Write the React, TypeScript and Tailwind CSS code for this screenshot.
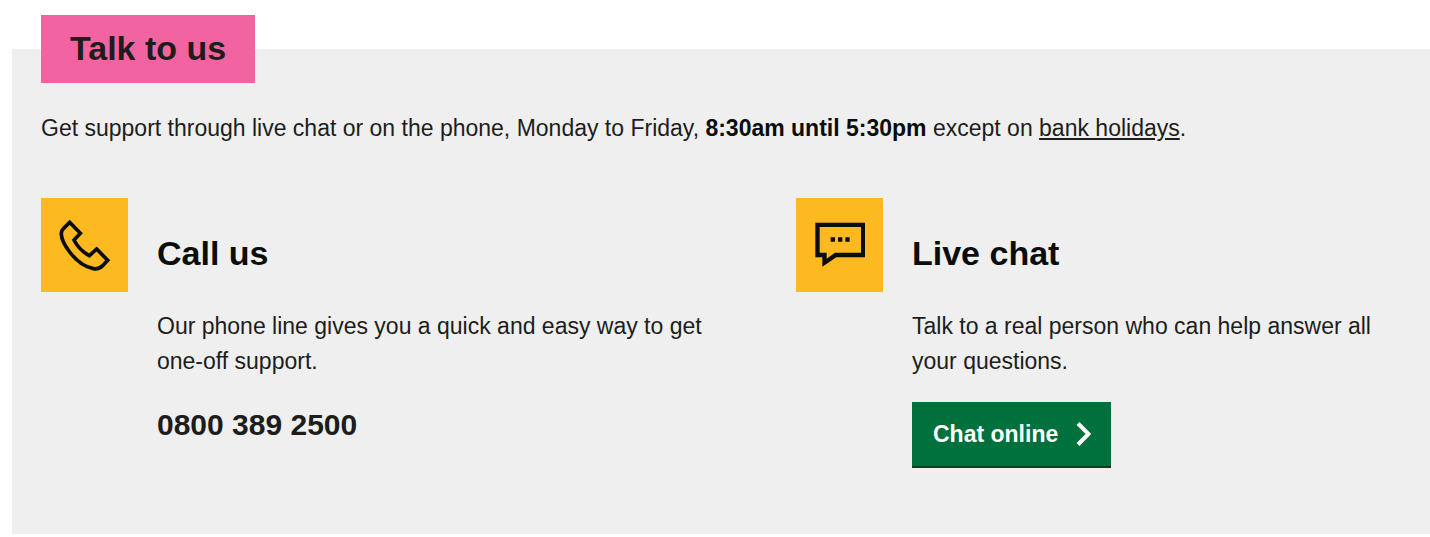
import type { ReactNode } from "react";

interface ContactOptionProps {
  title: string;
  icon: ReactNode;
  children: ReactNode;
}

const PhoneIcon = () => (
  <svg viewBox="33 24 261 282" className="h-full w-full" fill="none" aria-hidden="true">
    <path
      d="M119 97 L151 130 L132 150 Q147 180 178 197 L200 177 L233 211 L218 227 Q206 239 190 236 Q151 228 119 186 Q95 154 94 133 Q93 122 101 115 Z"
      stroke="#0b0c0c"
      strokeWidth="11"
    />
  </svg>
);

const ChatIcon = () => (
  <svg viewBox="33 24 261 282" className="h-full w-full" fill="#0b0c0c" aria-hidden="true">
    <path
      fillRule="evenodd"
      d="M91 98 H240 V202 H154 L112 230 V202 H91 Z M104 111 V188 H125 V206 L150 188 H228 V111 Z"
    />
    <path d="M137 142 h13 v13 h-13 Z M159 142 h13 v13 h-13 Z M181 142 h13 v13 h-13 Z" />
  </svg>
);

const ContactOption = ({ title, icon, children }: ContactOptionProps) => (
  <div className="flex items-start gap-[29px]">
    <div className="h-[94px] w-[87px] shrink-0 bg-[#fcb920]">{icon}</div>
    <div className="min-w-0 flex-1">
      <h3 className="mt-[35px] text-[34px] font-bold leading-10 text-[#0b0c0c]">{title}</h3>
      {children}
    </div>
  </div>
);

export default function App() {
  return (
    <main className="bg-white pb-[3px] pl-3 pt-[49px] font-['Liberation_Sans',Arial,sans-serif] text-[23px] leading-[35px] text-[#1d1d1b]">
      <section className="flex flex-col bg-[#efefef] px-[29px] pb-[66px]">
        <h2 className="-mt-[34px] self-start bg-[#f263a1] px-[29px] pb-[15px] pt-[13px] text-[34px] font-bold leading-10">
          Talk to us
        </h2>

        <p className="mt-7">
          Get support through live chat or on the phone, Monday to Friday,{" "}
          <strong className="text-[#0b0c0c]">8:30am until 5:30pm</strong> except on{" "}
          <a href="#bank-holidays" className="underline underline-offset-2">
            bank holidays
          </a>
          .
        </p>

        <div className="mt-[52px] grid grid-cols-[697fr_605fr] gap-[58px]">
          <ContactOption title="Call us" icon={<PhoneIcon />}>
            <p className="mt-9">
              Our phone line gives you a quick and easy way to get one-off support.
            </p>
            <p className="mt-7 text-[30px] font-bold">0800 389 2500</p>
          </ContactOption>

          <ContactOption title="Live chat" icon={<ChatIcon />}>
            <p className="mt-9">
              Talk to a real person who can help answer all your questions.
            </p>
            <button
              type="button"
              className="mt-[23px] flex h-[66px] items-center gap-[18px] border-b-2 border-[#0b3d22] bg-[#00703c] pl-[21px] pr-5 font-bold text-white"
            >
              Chat online
              <svg viewBox="0 0 15 24" className="h-6 w-[15px]" fill="none" aria-hidden="true">
                <path d="M2 1.5 L12.5 12 L2 22.5" stroke="currentColor" strokeWidth="4" />
              </svg>
            </button>
          </ContactOption>
        </div>
      </section>
    </main>
  );
}
